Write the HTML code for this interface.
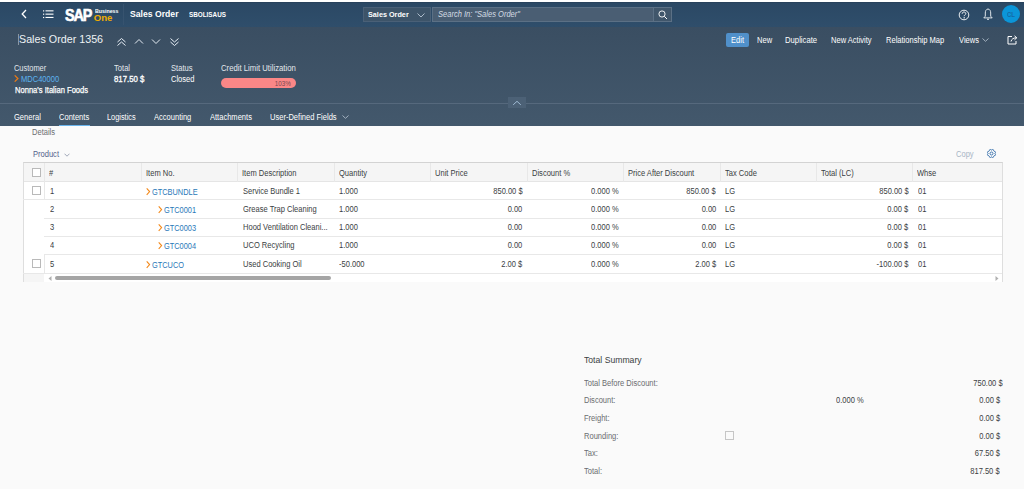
<!DOCTYPE html>
<html><head><meta charset="utf-8">
<style>
*{box-sizing:border-box;margin:0;padding:0}
html,body{width:1024px;height:489px;overflow:hidden;background:#fafafa;font-family:"Liberation Sans",sans-serif}
.t{position:absolute;white-space:nowrap;line-height:1}
.r{position:absolute}
</style></head><body>
<div class="r" style="left:0px;top:0px;width:1024px;height:2px;background:#fff;"></div>
<div class="r" style="left:0px;top:2px;width:1024px;height:25px;background:#2d4a66;background:linear-gradient(#2b4864,#2f4e6b);"></div>
<div class="r" style="left:0px;top:2px;width:1024px;height:1px;background:#28425c;"></div>
<div class="r" style="left:0px;top:27px;width:1024px;height:99px;background:#3b5064;background:linear-gradient(#3a4e62,#43586c);"></div>
<div class="r" style="left:0px;top:126px;width:1024px;height:363px;background:#fafafa;"></div>
<svg class="r" style="left:21px;top:9px" width="6" height="10" viewBox="0 0 6 10"><path d="M5 1 L1.2 5 L5 9" fill="none" stroke="#fff" stroke-width="1.3"/></svg>
<svg class="r" style="left:43px;top:10px" width="11" height="9" viewBox="0 0 11 9"><g fill="#fff"><rect x="0" y="0.3" width="1.2" height="1.2"/><rect x="0" y="3.6" width="1.2" height="1.2"/><rect x="0" y="6.9" width="1.2" height="1.2"/><rect x="2.5" y="0.3" width="8" height="1.1"/><rect x="2.5" y="3.6" width="8" height="1.1"/><rect x="2.5" y="6.9" width="8" height="1.1"/></g></svg>
<div class="t" style="left:64.8px;top:7.66px;font-size:16px;color:#fff;font-weight:bold;transform:scaleX(0.9);transform-origin:0 0;letter-spacing:-1.2px;-webkit-text-stroke:0.6px #fff;">SAP</div>
<div class="t" style="left:94.8px;top:8.32px;font-size:6px;color:#fff;font-weight:bold;transform:scaleX(0.88);transform-origin:0 0;">Business</div>
<div class="t" style="left:93.8px;top:13.47px;font-size:9.6px;color:#f0ab00;font-weight:bold;">One</div>
<div class="r" style="left:123px;top:4px;width:1px;height:21px;background:#37536f;"></div>
<div class="t" style="left:130px;top:9.98px;font-size:9px;color:#fff;font-weight:bold;transform:scaleX(0.96);transform-origin:0 0;">Sales Order</div>
<div class="t" style="left:189px;top:11.71px;font-size:6.6px;color:#fff;font-weight:bold;transform:scaleX(0.96);transform-origin:0 0;">SBOLISAUS</div>
<div class="r" style="left:362.5px;top:7px;width:68px;height:15px;background:#3d5469;border:1px solid #4a6077;"></div>
<div class="t" style="left:368px;top:10.60px;font-size:7.8px;color:#fff;font-weight:bold;transform:scaleX(0.93);transform-origin:0 0;">Sales Order</div>
<svg class="r" style="left:417px;top:12.5px" width="8" height="5" viewBox="0 0 8 5"><path d="M0.5 0.5 L4 4 L7.5 0.5" fill="none" stroke="#b8c6d4" stroke-width="0.9"/></svg>
<div class="r" style="left:431.5px;top:7px;width:222px;height:15px;background:#4a5e73;border:1px solid #5b7085;"></div>
<div class="r" style="left:653px;top:7px;width:18.5px;height:15px;background:#40566b;border:1px solid #5b7085;"></div>
<div class="t" style="left:437.8px;top:11.26px;font-size:8.2px;color:#d5dde5;font-weight:normal;font-style:italic;transform:scaleX(0.92);transform-origin:0 0;">Search In: "Sales Order"</div>
<svg class="r" style="left:657.5px;top:9.5px" width="10" height="10" viewBox="0 0 10 10"><circle cx="4" cy="4" r="3.1" fill="none" stroke="#fff" stroke-width="0.9"/><path d="M6.3 6.3 L9 9" stroke="#fff" stroke-width="1"/></svg>
<svg class="r" style="left:957.7px;top:8.6px" width="12" height="12" viewBox="0 0 12 12"><circle cx="6" cy="6" r="4.8" fill="none" stroke="#fff" stroke-width="0.9"/><path d="M4.2 4.8 C4.2 3.6 5 3 6 3 C7 3 7.8 3.6 7.8 4.6 C7.8 5.6 6.2 5.8 6.2 7.2" fill="none" stroke="#fff" stroke-width="0.9"/><rect x="5.6" y="8.2" width="1.2" height="1.2" fill="#fff"/></svg>
<svg class="r" style="left:982.8px;top:8px" width="10" height="13" viewBox="0 0 10 13"><path d="M5 1 C3.2 1.2 2.3 2.8 2.3 5 L2.3 8.2 L0.8 9.9 L9.2 9.9 L7.7 8.2 L7.7 5 C7.7 2.8 6.8 1.2 5 1 Z" fill="none" stroke="#f2f5f8" stroke-width="0.9" stroke-linejoin="round"/><path d="M4 11.3 L6 11.3" stroke="#f2f5f8" stroke-width="1.1"/></svg>
<div class="r" style="left:1002px;top:5.3px;width:18px;height:18px;background:#0b95d8;border-radius:50%;"></div>
<div class="t" style="left:1006.5px;top:11.67px;font-size:6.3px;color:#1469a6;font-weight:bold;transform:scaleX(0.95);transform-origin:0 0;">CL</div>
<div class="r" style="left:18px;top:34px;width:1px;height:11px;background:#8a97a4;"></div>
<div class="t" style="left:18.8px;top:33.79px;font-size:11px;color:#eef2f5;font-weight:normal;transform:scaleX(0.975);transform-origin:0 0;">Sales Order 1356</div>
<svg class="r" style="left:116px;top:36.5px" width="11" height="10" viewBox="0 0 11 10"><path d="M1.5 5 L5.5 1.5 L9.5 5 M1.5 8.5 L5.5 5 L9.5 8.5" fill="none" stroke="#e6edf4" stroke-width="1"/></svg>
<svg class="r" style="left:134px;top:38.2px" width="10" height="7" viewBox="0 0 10 7"><path d="M1 5.5 L5 1.5 L9 5.5" fill="none" stroke="#e6edf4" stroke-width="1"/></svg>
<svg class="r" style="left:151px;top:38.2px" width="10" height="7" viewBox="0 0 10 7"><path d="M1 1.5 L5 5.5 L9 1.5" fill="none" stroke="#e6edf4" stroke-width="1"/></svg>
<svg class="r" style="left:169px;top:36.5px" width="11" height="10" viewBox="0 0 11 10"><path d="M1.5 1.5 L5.5 5 L9.5 1.5 M1.5 5 L5.5 8.5 L9.5 5" fill="none" stroke="#e6edf4" stroke-width="1"/></svg>
<div class="r" style="left:726.4px;top:32.6px;width:22.2px;height:14.5px;background:#5090ca;border-radius:2px;"></div>
<div class="t" style="left:730.8px;top:35.89px;font-size:8.4px;color:#fff;font-weight:normal;transform:scaleX(0.9);transform-origin:0 0;">Edit</div>
<div class="t" style="left:756.8px;top:35.89px;font-size:8.4px;color:#fff;font-weight:normal;transform:scaleX(0.9);transform-origin:0 0;">New</div>
<div class="t" style="left:785.3px;top:35.89px;font-size:8.4px;color:#fff;font-weight:normal;transform:scaleX(0.92);transform-origin:0 0;">Duplicate</div>
<div class="t" style="left:831px;top:35.89px;font-size:8.4px;color:#fff;font-weight:normal;transform:scaleX(0.9);transform-origin:0 0;">New Activity</div>
<div class="t" style="left:885.5px;top:35.89px;font-size:8.4px;color:#fff;font-weight:normal;transform:scaleX(0.9);transform-origin:0 0;">Relationship Map</div>
<div class="t" style="left:958.5px;top:35.89px;font-size:8.4px;color:#fff;font-weight:normal;transform:scaleX(0.9);transform-origin:0 0;">Views</div>
<svg class="r" style="left:982px;top:38px" width="7" height="4" viewBox="0 0 7 4"><path d="M0.5 0.5 L3.5 3.3 L6.5 0.5" fill="none" stroke="#aebbc8" stroke-width="0.9"/></svg>
<svg class="r" style="left:1007px;top:35px" width="11" height="10" viewBox="0 0 11 10"><path d="M5 1.5 L1 1.5 L1 9 L9 9 L9 6" fill="none" stroke="#fff" stroke-width="1"/><path d="M4 6.5 C4.5 4 6.5 2.8 9.5 2.8 M7.5 0.8 L9.8 2.8 L7.5 4.8" fill="none" stroke="#fff" stroke-width="1"/></svg>
<div class="t" style="left:14.4px;top:64.32px;font-size:8.6px;color:#e3e8ed;font-weight:normal;transform:scaleX(0.865);transform-origin:0 0;">Customer</div>
<svg class="r" style="left:14px;top:75px" width="5" height="7" viewBox="0 0 5 7"><path d="M0.7 0.4 L3.9 3.5 L0.7 6.6" fill="none" stroke="#ec7a12" stroke-width="1.25"/></svg>
<div class="t" style="left:21px;top:75.19px;font-size:8.4px;color:#5cb2ef;font-weight:normal;transform:scaleX(0.9);transform-origin:0 0;">MDC40000</div>
<div class="t" style="left:14.6px;top:86.29px;font-size:8.4px;color:#fff;font-weight:normal;transform:scaleX(0.905);transform-origin:0 0;-webkit-text-stroke:0.25px #fff;">Nonna's Italian Foods</div>
<div class="t" style="left:114px;top:64.32px;font-size:8.6px;color:#e3e8ed;font-weight:normal;transform:scaleX(0.885);transform-origin:0 0;">Total</div>
<div class="t" style="left:114px;top:75.19px;font-size:8.4px;color:#fff;font-weight:normal;transform:scaleX(0.93);transform-origin:0 0;-webkit-text-stroke:0.3px #fff;">817.50 $</div>
<div class="t" style="left:170.5px;top:64.32px;font-size:8.6px;color:#e3e8ed;font-weight:normal;transform:scaleX(0.885);transform-origin:0 0;">Status</div>
<div class="t" style="left:170.5px;top:75.19px;font-size:8.4px;color:#fff;font-weight:normal;transform:scaleX(0.9);transform-origin:0 0;">Closed</div>
<div class="t" style="left:220.8px;top:64.32px;font-size:8.6px;color:#e3e8ed;font-weight:normal;transform:scaleX(0.9);transform-origin:0 0;">Credit Limit Utilization</div>
<div class="r" style="left:220.5px;top:78.2px;width:75px;height:9.8px;background:#fb8787;border-radius:5px;"></div>
<div class="t" style="right:733px;top:79.57px;font-size:7px;color:#744850;font-weight:normal;transform:scaleX(0.9);transform-origin:100% 0;">103%</div>
<div class="r" style="left:0px;top:103px;width:1024px;height:1px;background:#56697d;"></div>
<div class="r" style="left:508px;top:97px;width:18px;height:11px;background:#4c6176;"></div>
<svg class="r" style="left:512px;top:100px" width="10" height="6" viewBox="0 0 10 6"><path d="M1.2 4.8 L5 1.3 L8.8 4.8" fill="none" stroke="#a8c4de" stroke-width="0.9"/></svg>
<div class="t" style="left:14px;top:113.09px;font-size:8.4px;color:#fff;font-weight:normal;transform:scaleX(0.9);transform-origin:0 0;">General</div>
<div class="t" style="left:59px;top:113.09px;font-size:8.4px;color:#fff;font-weight:normal;transform:scaleX(0.9);transform-origin:0 0;">Contents</div>
<div class="r" style="left:59px;top:124.5px;width:30.5px;height:1.5px;background:#6ab4ec;"></div>
<div class="t" style="left:107.2px;top:113.09px;font-size:8.4px;color:#fff;font-weight:normal;transform:scaleX(0.88);transform-origin:0 0;">Logistics</div>
<div class="t" style="left:154px;top:113.09px;font-size:8.4px;color:#fff;font-weight:normal;transform:scaleX(0.9);transform-origin:0 0;">Accounting</div>
<div class="t" style="left:209.5px;top:113.09px;font-size:8.4px;color:#fff;font-weight:normal;transform:scaleX(0.9);transform-origin:0 0;">Attachments</div>
<div class="t" style="left:270px;top:113.09px;font-size:8.4px;color:#fff;font-weight:normal;transform:scaleX(0.9);transform-origin:0 0;">User-Defined Fields</div>
<svg class="r" style="left:342px;top:115px" width="7" height="4" viewBox="0 0 7 4"><path d="M0.5 0.5 L3.5 3.3 L6.5 0.5" fill="none" stroke="#aebbc8" stroke-width="0.9"/></svg>
<div class="t" style="left:31.8px;top:127.89px;font-size:8.4px;color:#6a6d70;font-weight:normal;transform:scaleX(0.9);transform-origin:0 0;">Details</div>
<div class="t" style="left:33px;top:149.89px;font-size:8.4px;color:#52618a;font-weight:normal;transform:scaleX(0.9);transform-origin:0 0;">Product</div>
<svg class="r" style="left:64px;top:152.5px" width="6" height="4" viewBox="0 0 6 4"><path d="M0.5 0.7 L3 3.2 L5.5 0.7" fill="none" stroke="#8a93a8" stroke-width="0.8"/></svg>
<div class="t" style="left:955.6px;top:149.89px;font-size:8.4px;color:#a8b5c5;font-weight:normal;transform:scaleX(0.9);transform-origin:0 0;">Copy</div>
<svg class="r" style="left:986.1px;top:148.4px" width="11" height="11" viewBox="0 0 11 11"><path d="M8.97 5.96 L9.53 6.50 L9.05 7.64 L8.28 7.63 L7.63 8.28 L7.64 9.05 L6.50 9.53 L5.96 8.97 L5.04 8.97 L4.50 9.53 L3.36 9.05 L3.37 8.28 L2.72 7.63 L1.95 7.64 L1.47 6.50 L2.03 5.96 L2.03 5.04 L1.47 4.50 L1.95 3.36 L2.72 3.37 L3.37 2.72 L3.36 1.95 L4.50 1.47 L5.04 2.03 L5.96 2.03 L6.50 1.47 L7.64 1.95 L7.63 2.72 L8.28 3.37 L9.05 3.36 L9.53 4.50 L8.97 5.04 Z" fill="none" stroke="#2f6aa8" stroke-width="0.9" stroke-linejoin="round"/><circle cx="5.5" cy="5.5" r="1.5" fill="none" stroke="#2f6aa8" stroke-width="0.9"/></svg>
<div class="r" style="left:23px;top:162px;width:980px;height:120px;background:#fff;border:1px solid #dedede;border-top-color:#d3d3d3;border-bottom:none;"></div>
<div class="r" style="left:24px;top:163px;width:978px;height:18.5px;background:#f5f5f5;border-bottom:1px solid #e5e5e5;"></div>
<div class="r" style="left:44px;top:163px;width:1px;height:18.5px;background:#e8e8e8;"></div>
<div class="r" style="left:141px;top:163px;width:1px;height:18.5px;background:#e8e8e8;"></div>
<div class="r" style="left:237px;top:163px;width:1px;height:18.5px;background:#e8e8e8;"></div>
<div class="r" style="left:334px;top:163px;width:1px;height:18.5px;background:#e8e8e8;"></div>
<div class="r" style="left:430px;top:163px;width:1px;height:18.5px;background:#e8e8e8;"></div>
<div class="r" style="left:527px;top:163px;width:1px;height:18.5px;background:#e8e8e8;"></div>
<div class="r" style="left:623px;top:163px;width:1px;height:18.5px;background:#e8e8e8;"></div>
<div class="r" style="left:720px;top:163px;width:1px;height:18.5px;background:#e8e8e8;"></div>
<div class="r" style="left:816px;top:163px;width:1px;height:18.5px;background:#e8e8e8;"></div>
<div class="r" style="left:912px;top:163px;width:1px;height:18.5px;background:#e8e8e8;"></div>
<div class="r" style="left:32px;top:168px;width:9px;height:9px;background:#fff;border:1.2px solid #b9b9b9;"></div>
<div class="t" style="left:49px;top:168.59px;font-size:8.4px;color:#3a3e42;font-weight:normal;transform:scaleX(0.9);transform-origin:0 0;">#</div>
<div class="t" style="left:146px;top:168.59px;font-size:8.4px;color:#3a3e42;font-weight:normal;transform:scaleX(0.9);transform-origin:0 0;">Item No.</div>
<div class="t" style="left:242px;top:168.59px;font-size:8.4px;color:#3a3e42;font-weight:normal;transform:scaleX(0.9);transform-origin:0 0;">Item Description</div>
<div class="t" style="left:339px;top:168.59px;font-size:8.4px;color:#3a3e42;font-weight:normal;transform:scaleX(0.9);transform-origin:0 0;">Quantity</div>
<div class="t" style="left:435px;top:168.59px;font-size:8.4px;color:#3a3e42;font-weight:normal;transform:scaleX(0.9);transform-origin:0 0;">Unit Price</div>
<div class="t" style="left:532px;top:168.59px;font-size:8.4px;color:#3a3e42;font-weight:normal;transform:scaleX(0.9);transform-origin:0 0;">Discount %</div>
<div class="t" style="left:628px;top:168.59px;font-size:8.4px;color:#3a3e42;font-weight:normal;transform:scaleX(0.9);transform-origin:0 0;">Price After Discount</div>
<div class="t" style="left:725px;top:168.59px;font-size:8.4px;color:#3a3e42;font-weight:normal;transform:scaleX(0.9);transform-origin:0 0;">Tax Code</div>
<div class="t" style="left:821px;top:168.59px;font-size:8.4px;color:#3a3e42;font-weight:normal;transform:scaleX(0.9);transform-origin:0 0;">Total (LC)</div>
<div class="t" style="left:917px;top:168.59px;font-size:8.4px;color:#3a3e42;font-weight:normal;transform:scaleX(0.9);transform-origin:0 0;">Whse</div>
<div class="r" style="left:23px;top:199px;width:979px;height:1px;background:#e8e8e8;"></div>
<div class="r" style="left:32px;top:186px;width:9px;height:9px;background:#fff;border:1.2px solid #b9b9b9;"></div>
<div class="r" style="left:44px;top:181px;width:1px;height:18px;background:#e8e8e8;"></div>
<div class="t" style="left:49.5px;top:187.09px;font-size:8.4px;color:#3a3e42;font-weight:normal;transform:scaleX(0.9);transform-origin:0 0;">1</div>
<svg class="r" style="left:146px;top:188.0px" width="5" height="8" viewBox="0 0 5 8"><path d="M0.7 0.4 L3.6 3.6 L0.7 6.8" fill="none" stroke="#f38a1c" stroke-width="1.1"/></svg>
<div class="t" style="left:152.1px;top:187.92px;font-size:8.6px;color:#2a78b8;font-weight:normal;transform:scaleX(0.86);transform-origin:0 0;">GTCBUNDLE</div>
<div class="t" style="left:242.5px;top:187.09px;font-size:8.4px;color:#3a3e42;font-weight:normal;transform:scaleX(0.9);transform-origin:0 0;">Service Bundle 1</div>
<div class="t" style="left:339px;top:187.09px;font-size:8.4px;color:#3a3e42;font-weight:normal;transform:scaleX(0.9);transform-origin:0 0;">1.000</div>
<div class="t" style="right:501.5px;top:187.09px;font-size:8.4px;color:#3a3e42;font-weight:normal;transform:scaleX(0.9);transform-origin:100% 0;">850.00 $</div>
<div class="t" style="right:405px;top:187.09px;font-size:8.4px;color:#3a3e42;font-weight:normal;transform:scaleX(0.9);transform-origin:100% 0;">0.000 %</div>
<div class="t" style="right:308px;top:187.09px;font-size:8.4px;color:#3a3e42;font-weight:normal;transform:scaleX(0.9);transform-origin:100% 0;">850.00 $</div>
<div class="t" style="left:725px;top:187.09px;font-size:8.4px;color:#3a3e42;font-weight:normal;transform:scaleX(0.9);transform-origin:0 0;">LG</div>
<div class="t" style="right:115.29999999999995px;top:187.09px;font-size:8.4px;color:#3a3e42;font-weight:normal;transform:scaleX(0.9);transform-origin:100% 0;">850.00 $</div>
<div class="t" style="left:918px;top:187.09px;font-size:8.4px;color:#3a3e42;font-weight:normal;transform:scaleX(0.9);transform-origin:0 0;">01</div>
<div class="r" style="left:44px;top:218px;width:958px;height:1px;background:#e8e8e8;"></div>
<div class="t" style="left:49.5px;top:205.29px;font-size:8.4px;color:#3a3e42;font-weight:normal;transform:scaleX(0.9);transform-origin:0 0;">2</div>
<svg class="r" style="left:158px;top:206.20000000000002px" width="5" height="8" viewBox="0 0 5 8"><path d="M0.7 0.4 L3.6 3.6 L0.7 6.8" fill="none" stroke="#f38a1c" stroke-width="1.1"/></svg>
<div class="t" style="left:164.1px;top:206.12px;font-size:8.6px;color:#2a78b8;font-weight:normal;transform:scaleX(0.86);transform-origin:0 0;">GTC0001</div>
<div class="t" style="left:242.5px;top:205.29px;font-size:8.4px;color:#3a3e42;font-weight:normal;transform:scaleX(0.9);transform-origin:0 0;">Grease Trap Cleaning</div>
<div class="t" style="left:339px;top:205.29px;font-size:8.4px;color:#3a3e42;font-weight:normal;transform:scaleX(0.9);transform-origin:0 0;">1.000</div>
<div class="t" style="right:501.5px;top:205.29px;font-size:8.4px;color:#3a3e42;font-weight:normal;transform:scaleX(0.9);transform-origin:100% 0;">0.00</div>
<div class="t" style="right:405px;top:205.29px;font-size:8.4px;color:#3a3e42;font-weight:normal;transform:scaleX(0.9);transform-origin:100% 0;">0.000 %</div>
<div class="t" style="right:308px;top:205.29px;font-size:8.4px;color:#3a3e42;font-weight:normal;transform:scaleX(0.9);transform-origin:100% 0;">0.00</div>
<div class="t" style="left:725px;top:205.29px;font-size:8.4px;color:#3a3e42;font-weight:normal;transform:scaleX(0.9);transform-origin:0 0;">LG</div>
<div class="t" style="right:115.29999999999995px;top:205.29px;font-size:8.4px;color:#3a3e42;font-weight:normal;transform:scaleX(0.9);transform-origin:100% 0;">0.00 $</div>
<div class="t" style="left:918px;top:205.29px;font-size:8.4px;color:#3a3e42;font-weight:normal;transform:scaleX(0.9);transform-origin:0 0;">01</div>
<div class="r" style="left:44px;top:236px;width:958px;height:1px;background:#e8e8e8;"></div>
<div class="t" style="left:49.5px;top:223.49px;font-size:8.4px;color:#3a3e42;font-weight:normal;transform:scaleX(0.9);transform-origin:0 0;">3</div>
<svg class="r" style="left:158px;top:224.4px" width="5" height="8" viewBox="0 0 5 8"><path d="M0.7 0.4 L3.6 3.6 L0.7 6.8" fill="none" stroke="#f38a1c" stroke-width="1.1"/></svg>
<div class="t" style="left:164.1px;top:224.32px;font-size:8.6px;color:#2a78b8;font-weight:normal;transform:scaleX(0.86);transform-origin:0 0;">GTC0003</div>
<div class="t" style="left:242.5px;top:223.49px;font-size:8.4px;color:#3a3e42;font-weight:normal;transform:scaleX(0.9);transform-origin:0 0;">Hood Ventilation Cleani...</div>
<div class="t" style="left:339px;top:223.49px;font-size:8.4px;color:#3a3e42;font-weight:normal;transform:scaleX(0.9);transform-origin:0 0;">1.000</div>
<div class="t" style="right:501.5px;top:223.49px;font-size:8.4px;color:#3a3e42;font-weight:normal;transform:scaleX(0.9);transform-origin:100% 0;">0.00</div>
<div class="t" style="right:405px;top:223.49px;font-size:8.4px;color:#3a3e42;font-weight:normal;transform:scaleX(0.9);transform-origin:100% 0;">0.000 %</div>
<div class="t" style="right:308px;top:223.49px;font-size:8.4px;color:#3a3e42;font-weight:normal;transform:scaleX(0.9);transform-origin:100% 0;">0.00</div>
<div class="t" style="left:725px;top:223.49px;font-size:8.4px;color:#3a3e42;font-weight:normal;transform:scaleX(0.9);transform-origin:0 0;">LG</div>
<div class="t" style="right:115.29999999999995px;top:223.49px;font-size:8.4px;color:#3a3e42;font-weight:normal;transform:scaleX(0.9);transform-origin:100% 0;">0.00 $</div>
<div class="t" style="left:918px;top:223.49px;font-size:8.4px;color:#3a3e42;font-weight:normal;transform:scaleX(0.9);transform-origin:0 0;">01</div>
<div class="r" style="left:44px;top:254px;width:958px;height:1px;background:#e8e8e8;"></div>
<div class="t" style="left:49.5px;top:241.49px;font-size:8.4px;color:#3a3e42;font-weight:normal;transform:scaleX(0.9);transform-origin:0 0;">4</div>
<svg class="r" style="left:158px;top:242.4px" width="5" height="8" viewBox="0 0 5 8"><path d="M0.7 0.4 L3.6 3.6 L0.7 6.8" fill="none" stroke="#f38a1c" stroke-width="1.1"/></svg>
<div class="t" style="left:164.1px;top:242.32px;font-size:8.6px;color:#2a78b8;font-weight:normal;transform:scaleX(0.86);transform-origin:0 0;">GTC0004</div>
<div class="t" style="left:242.5px;top:241.49px;font-size:8.4px;color:#3a3e42;font-weight:normal;transform:scaleX(0.9);transform-origin:0 0;">UCO Recycling</div>
<div class="t" style="left:339px;top:241.49px;font-size:8.4px;color:#3a3e42;font-weight:normal;transform:scaleX(0.9);transform-origin:0 0;">1.000</div>
<div class="t" style="right:501.5px;top:241.49px;font-size:8.4px;color:#3a3e42;font-weight:normal;transform:scaleX(0.9);transform-origin:100% 0;">0.00</div>
<div class="t" style="right:405px;top:241.49px;font-size:8.4px;color:#3a3e42;font-weight:normal;transform:scaleX(0.9);transform-origin:100% 0;">0.000 %</div>
<div class="t" style="right:308px;top:241.49px;font-size:8.4px;color:#3a3e42;font-weight:normal;transform:scaleX(0.9);transform-origin:100% 0;">0.00</div>
<div class="t" style="left:725px;top:241.49px;font-size:8.4px;color:#3a3e42;font-weight:normal;transform:scaleX(0.9);transform-origin:0 0;">LG</div>
<div class="t" style="right:115.29999999999995px;top:241.49px;font-size:8.4px;color:#3a3e42;font-weight:normal;transform:scaleX(0.9);transform-origin:100% 0;">0.00 $</div>
<div class="t" style="left:918px;top:241.49px;font-size:8.4px;color:#3a3e42;font-weight:normal;transform:scaleX(0.9);transform-origin:0 0;">01</div>
<div class="r" style="left:23px;top:273px;width:979px;height:1px;background:#e8e8e8;"></div>
<div class="r" style="left:32px;top:258.6px;width:9px;height:9px;background:#fff;border:1.2px solid #b9b9b9;"></div>
<div class="r" style="left:44px;top:254px;width:1px;height:19px;background:#e8e8e8;"></div>
<div class="t" style="left:49.5px;top:259.69px;font-size:8.4px;color:#3a3e42;font-weight:normal;transform:scaleX(0.9);transform-origin:0 0;">5</div>
<svg class="r" style="left:146px;top:260.6px" width="5" height="8" viewBox="0 0 5 8"><path d="M0.7 0.4 L3.6 3.6 L0.7 6.8" fill="none" stroke="#f38a1c" stroke-width="1.1"/></svg>
<div class="t" style="left:152.1px;top:260.52px;font-size:8.6px;color:#2a78b8;font-weight:normal;transform:scaleX(0.86);transform-origin:0 0;">GTCUCO</div>
<div class="t" style="left:242.5px;top:259.69px;font-size:8.4px;color:#3a3e42;font-weight:normal;transform:scaleX(0.9);transform-origin:0 0;">Used Cooking Oil</div>
<div class="t" style="left:339px;top:259.69px;font-size:8.4px;color:#3a3e42;font-weight:normal;transform:scaleX(0.9);transform-origin:0 0;">-50.000</div>
<div class="t" style="right:501.5px;top:259.69px;font-size:8.4px;color:#3a3e42;font-weight:normal;transform:scaleX(0.9);transform-origin:100% 0;">2.00 $</div>
<div class="t" style="right:405px;top:259.69px;font-size:8.4px;color:#3a3e42;font-weight:normal;transform:scaleX(0.9);transform-origin:100% 0;">0.000 %</div>
<div class="t" style="right:308px;top:259.69px;font-size:8.4px;color:#3a3e42;font-weight:normal;transform:scaleX(0.9);transform-origin:100% 0;">2.00 $</div>
<div class="t" style="left:725px;top:259.69px;font-size:8.4px;color:#3a3e42;font-weight:normal;transform:scaleX(0.9);transform-origin:0 0;">LG</div>
<div class="t" style="right:115.29999999999995px;top:259.69px;font-size:8.4px;color:#3a3e42;font-weight:normal;transform:scaleX(0.9);transform-origin:100% 0;">-100.00 $</div>
<div class="t" style="left:918px;top:259.69px;font-size:8.4px;color:#3a3e42;font-weight:normal;transform:scaleX(0.9);transform-origin:0 0;">01</div>
<div class="r" style="left:24px;top:274px;width:978px;height:8px;background:#f5f5f5;"></div>
<div class="r" style="left:44px;top:274px;width:958px;height:8px;background:#fff;"></div>
<svg class="r" style="left:47.5px;top:275.8px" width="4" height="5" viewBox="0 0 4 5"><path d="M3.5 0 L0.5 2.5 L3.5 5 Z" fill="#b0b0b0"/></svg>
<div class="r" style="left:55px;top:275.8px;width:276px;height:4.6px;background:#a5a5a5;border-radius:2.3px;"></div>
<svg class="r" style="left:995px;top:275.8px" width="4" height="5" viewBox="0 0 4 5"><path d="M0.5 0 L3.5 2.5 L0.5 5 Z" fill="#b0b0b0"/></svg>
<div class="t" style="left:584px;top:354.97px;font-size:9.6px;color:#3a3e42;font-weight:normal;transform:scaleX(0.9);transform-origin:0 0;">Total Summary</div>
<div class="t" style="left:583.8px;top:378.89px;font-size:8.4px;color:#6a6d70;font-weight:normal;transform:scaleX(0.9);transform-origin:0 0;">Total Before Discount:</div>
<div class="t" style="right:21.5px;top:378.89px;font-size:8.4px;color:#3a3e42;font-weight:normal;transform:scaleX(0.9);transform-origin:100% 0;">750.00 $</div>
<div class="t" style="left:583.8px;top:396.49px;font-size:8.4px;color:#6a6d70;font-weight:normal;transform:scaleX(0.9);transform-origin:0 0;">Discount:</div>
<div class="t" style="right:24px;top:396.49px;font-size:8.4px;color:#3a3e42;font-weight:normal;transform:scaleX(0.9);transform-origin:100% 0;">0.00 $</div>
<div class="t" style="left:583.8px;top:414.09px;font-size:8.4px;color:#6a6d70;font-weight:normal;transform:scaleX(0.9);transform-origin:0 0;">Freight:</div>
<div class="t" style="right:24px;top:414.09px;font-size:8.4px;color:#3a3e42;font-weight:normal;transform:scaleX(0.9);transform-origin:100% 0;">0.00 $</div>
<div class="t" style="left:583.8px;top:431.69px;font-size:8.4px;color:#6a6d70;font-weight:normal;transform:scaleX(0.9);transform-origin:0 0;">Rounding:</div>
<div class="t" style="right:24px;top:431.69px;font-size:8.4px;color:#3a3e42;font-weight:normal;transform:scaleX(0.9);transform-origin:100% 0;">0.00 $</div>
<div class="t" style="left:583.8px;top:449.29px;font-size:8.4px;color:#6a6d70;font-weight:normal;transform:scaleX(0.9);transform-origin:0 0;">Tax:</div>
<div class="t" style="right:24px;top:449.29px;font-size:8.4px;color:#3a3e42;font-weight:normal;transform:scaleX(0.9);transform-origin:100% 0;">67.50 $</div>
<div class="t" style="left:583.8px;top:466.89px;font-size:8.4px;color:#6a6d70;font-weight:normal;transform:scaleX(0.9);transform-origin:0 0;">Total:</div>
<div class="t" style="right:24px;top:466.89px;font-size:8.4px;color:#3a3e42;font-weight:normal;transform:scaleX(0.9);transform-origin:100% 0;">817.50 $</div>
<div class="t" style="left:835.5px;top:396.49px;font-size:8.4px;color:#3a3e42;font-weight:normal;transform:scaleX(0.9);transform-origin:0 0;">0.000 %</div>
<div class="r" style="left:725px;top:430.8px;width:9px;height:9px;background:#fafafa;border:1.2px solid #c6c6c6;"></div>
</body></html>
